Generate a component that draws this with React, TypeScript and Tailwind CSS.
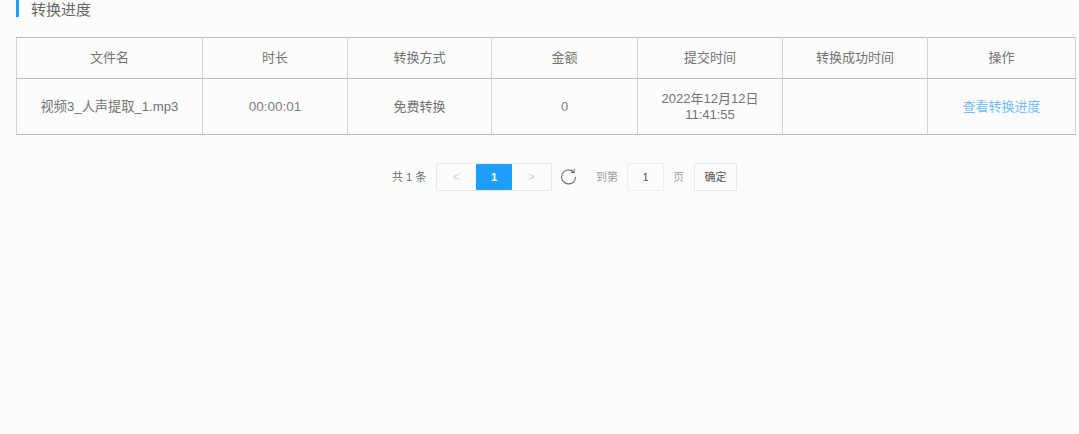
import React from 'react';

const font = 'font-["Liberation_Sans","Noto_Sans_CJK_SC",sans-serif]';
const cell = 'border-x border-y border-x-[#d2d2d2] border-y-[#bcbcbc] p-0';

const headers = [
  { label: '文件名', width: 'w-[186px]' },
  { label: '时长', width: 'w-[145px]' },
  { label: '转换方式', width: 'w-[144px]' },
  { label: '金额', width: 'w-[146px]' },
  { label: '提交时间', width: 'w-[145px]' },
  { label: '转换成功时间', width: 'w-[145px]' },
  { label: '操作', width: 'w-[148px]' },
];

const RefreshIcon = () => (
  <svg width="18" height="18" viewBox="0 0 18 18" fill="none" stroke="#707070" strokeWidth="1.2">
    <path d="M15.6 8.9a7 7 0 1 1-2.2-5.1" />
    <path d="M14.2 1v3.4h-3.3" strokeWidth="1.1" />
  </svg>
);

const App: React.FC = () => {
  return (
    <div className={`${font} h-[434px] w-[1079px] overflow-hidden bg-[#fcfcfc] pl-4 text-[#737373]`}>
      <div className="h-[17px] border-l-[3px] border-[#1ba1fb] pl-3 text-[15px] leading-[19px] text-[#666]">
        转换进度
      </div>

      <table className="mt-5 w-[1059px] table-fixed border-collapse text-[13px]">
        <thead>
          <tr className="h-[41px]">
            {headers.map((h) => (
              <th key={h.label} className={`${h.width} ${cell} text-center font-normal`}>
                {h.label}
              </th>
            ))}
          </tr>
        </thead>
        <tbody>
          <tr className="h-14 text-center leading-4">
            <td className={`${cell} text-[13.2px]`}>视频3_人声提取_1.mp3</td>
            <td className={`${cell} text-[13.5px] text-[#808080]`}>00:00:01</td>
            <td className={cell}>免费转换</td>
            <td className={`${cell} text-[#808080]`}>0</td>
            <td className={cell}>
              2022年12月12日
              <br />
              11:41:55
            </td>
            <td className={cell}></td>
            <td className={`${cell} text-[#72bdf7]`}>查看转换进度</td>
          </tr>
        </tbody>
      </table>

      <div className="mt-7 flex h-[28px] items-center pl-[376px] text-[11px]">
        <span className="w-11 text-[#707070]">共 1 条</span>
        <div className="flex h-[28px] w-[116px] rounded-[1px] border border-[#e8e8e8] text-[#cfcfcf]">
          <span className="flex w-[39px] items-center justify-center text-xs">&lt;</span>
          <span className="flex w-9 items-center justify-center rounded-[1px] bg-[#1e9fff] text-[11px] font-bold text-white">1</span>
          <span className="flex w-[39px] items-center justify-center text-xs">&gt;</span>
        </div>
        <span className="ml-2 flex w-[18px] items-center">
          <RefreshIcon />
        </span>
        <span className="ml-[18px] text-[#a0a0a0]">到第</span>
        <span className="ml-[9px] flex h-[28px] w-[37px] items-center justify-center rounded-[1px] border border-[#eee] text-[#555]">1</span>
        <span className="ml-[9px] text-[#a0a0a0]">页</span>
        <span className="ml-[10px] flex h-[28px] w-[43px] items-center justify-center rounded-[1px] border border-[#e8e8e8] text-[#555]">确定</span>
      </div>
    </div>
  );
};

export default App;
